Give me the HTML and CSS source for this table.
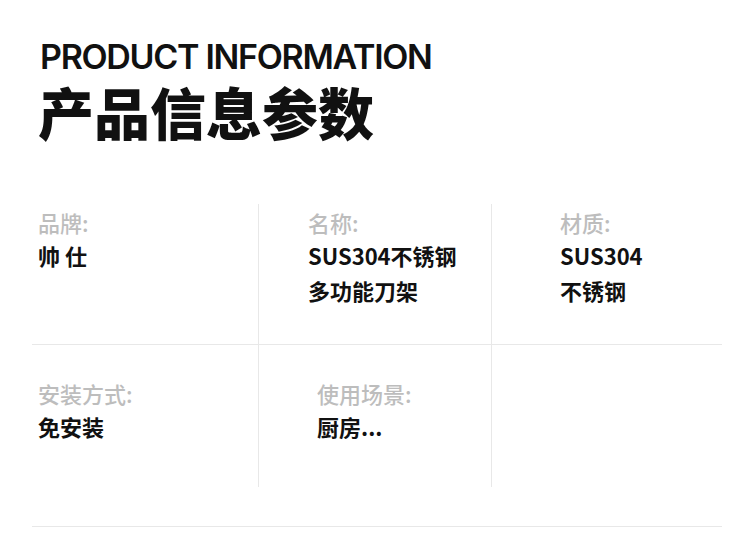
FILE: index.html
```html
<!DOCTYPE html>
<html lang="zh-CN">
<head>
    <meta charset="UTF-8">
    <meta name="viewport" content="width=device-width, initial-scale=1.0">
    <title>产品信息参数</title>
    <link rel="stylesheet" href="styles.css">
</head>
<body>

<div class="page">
    <div class="header">
        <div class="title-en">PRODUCT INFORMATION</div>
        <div class="title-cn">产品信息参数</div>
    </div>

    <div class="specs">
        <div class="row row-top">
            <div class="cell cell-first">
                <div class="label">品牌:</div>
                <div class="value">帅 仕</div>
            </div>
            <div class="cell cell-mid">
                <div class="label">名称:</div>
                <div class="value">SUS304不锈钢</div>
                <div class="value">多功能刀架</div>
            </div>
            <div class="cell cell-last">
                <div class="label">材质:</div>
                <div class="value">SUS304</div>
                <div class="value">不锈钢</div>
            </div>
        </div>

        <div class="row row-bottom">
            <div class="cell cell-first">
                <div class="label">安装方式:</div>
                <div class="value">免安装</div>
            </div>
            <div class="cell cell-mid cell-mid-wide">
                <div class="label">使用场景:</div>
                <div class="value">厨房...</div>
            </div>
            <div class="cell cell-last"></div>
        </div>
    </div>
</div>

</body>
</html>
```

FILE: styles.css
```css
body {
    margin: 0;
    background-color: #fff;
    color: #111;
    font-family: "Noto Sans CJK SC", "Noto Sans", sans-serif;
}

.page {
    width: 690px;
    padding-left: 32px;
}

.header {
    padding-left: 6px;
    padding-top: 40px;
}

.title-en {
    font-family: Inter, "Liberation Sans", sans-serif;
    font-weight: 600;
    font-size: 34px;
    line-height: 34px;
    letter-spacing: -1.3px;
    padding-left: 2px;
}

.title-cn {
    font-weight: 900;
    font-size: 56px;
    line-height: 58px;
    margin-top: 8px;
}

.specs {
    margin-top: 64px;
}

.row {
    display: grid;
    grid-template-columns: 226px 233px 231px;
    border-bottom: 1px solid #e8e8e8;
}

.cell {
    box-sizing: border-box;
}

.row-top .cell {
    height: 140px;
    padding-top: 2px;
}

.row-bottom {
    padding-bottom: 39px;
}

.row-bottom .cell {
    height: 142px;
    padding-top: 32px;
}

.cell-first {
    padding-left: 6px;
}

.cell-mid {
    padding-left: 49px;
    border-left: 1px solid #e8e8e8;
}

.cell-mid-wide {
    padding-left: 58px;
}

.cell-last {
    padding-left: 68px;
    border-left: 1px solid #e8e8e8;
}

.label {
    color: #bdbdbd;
    font-size: 22px;
    line-height: 32px;
    font-weight: 500;
}

.value {
    color: #111;
    font-size: 22px;
    line-height: 35px;
    font-weight: 700;
}
```
